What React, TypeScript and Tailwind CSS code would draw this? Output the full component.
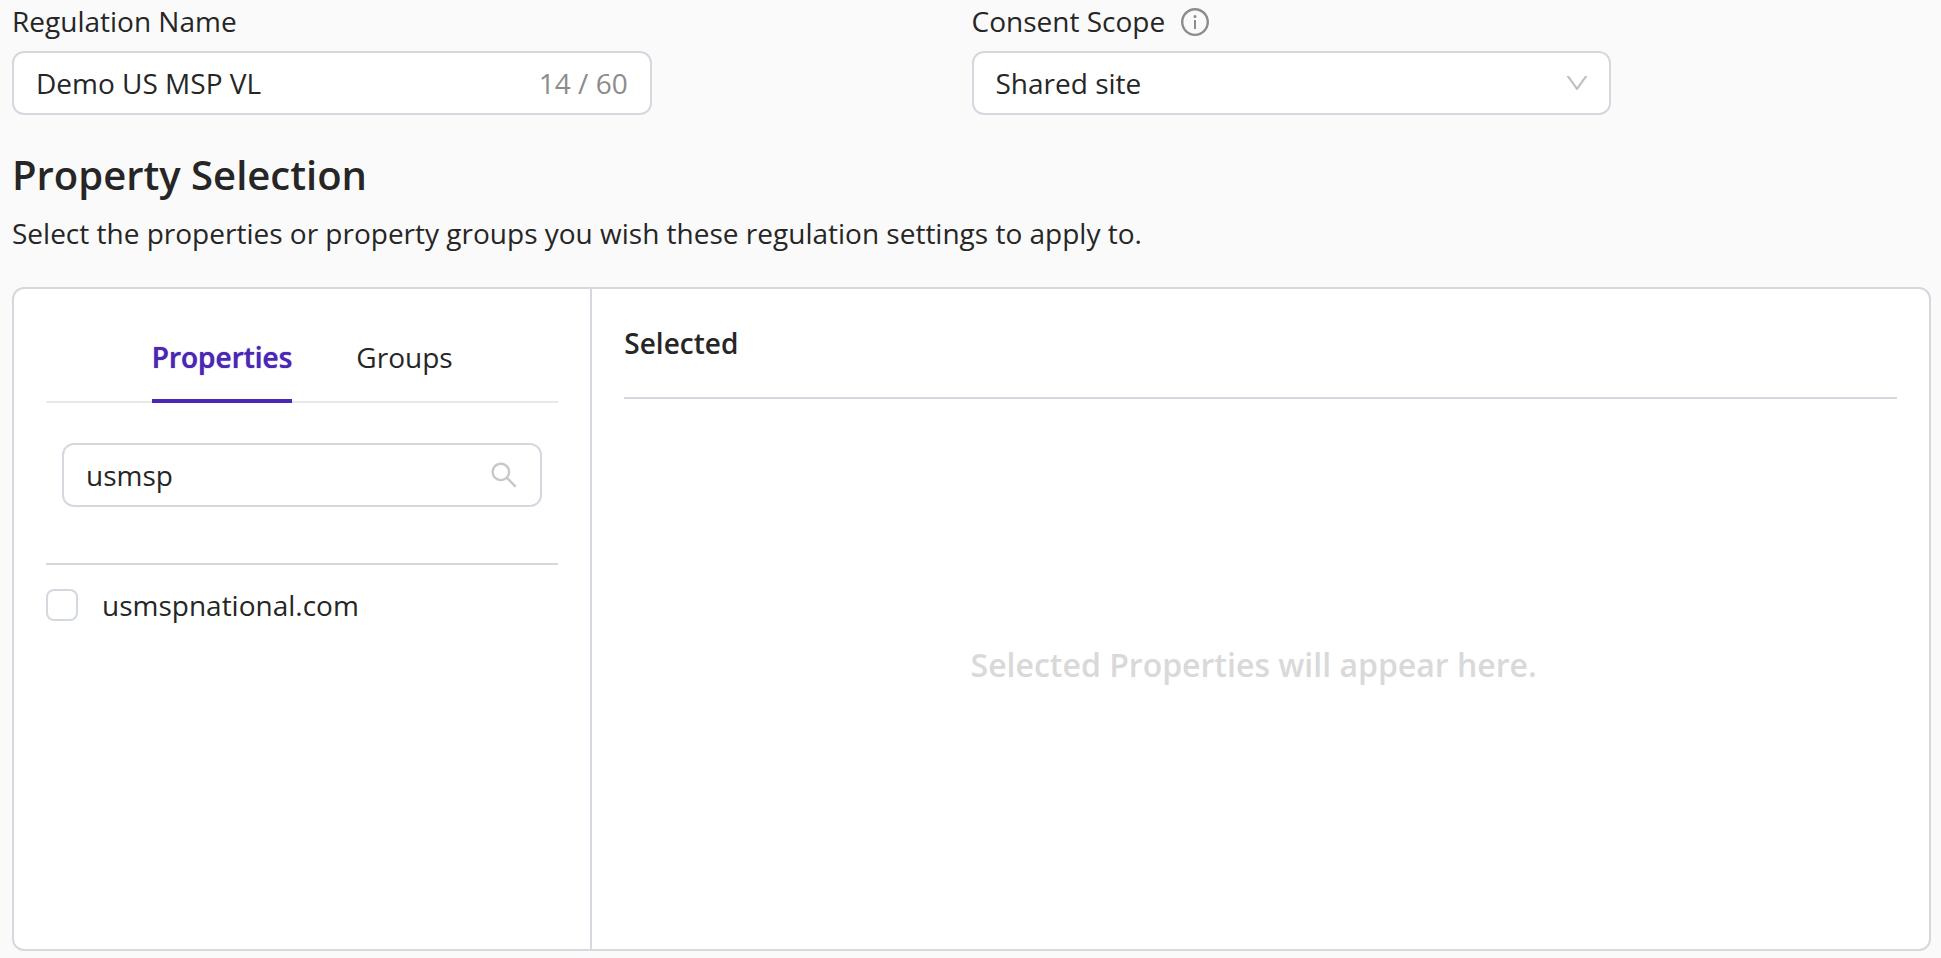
import { useState } from "react";
import { AiOutlineDown, AiOutlineInfoCircle, AiOutlineSearch } from "react-icons/ai";

const MAX_NAME = 60;
const PROPERTIES = ["usmspnational.com"];
const TABS = ["Properties", "Groups"];

export default function App() {
  const [name, setName] = useState("Demo US MSP VL");
  const [tab, setTab] = useState("Properties");
  const [query, setQuery] = useState("usmsp");

  return (
    <main className="flex min-h-screen flex-col bg-[#fafafa] pr-2.5 pb-2 pl-3 font-['Open_Sans',sans-serif] text-[28px] leading-[44px] text-[#262626]">
      <div className="grid grid-cols-2">
        <div className="w-2/3">
          <label htmlFor="regulation-name" className="block leading-[42px]">
            Regulation Name
          </label>
          <div className="mt-[9px] flex h-16 items-center rounded-xl border-2 border-[#d3d9de] bg-white px-[22px]">
            <input
              id="regulation-name"
              type="text"
              maxLength={MAX_NAME}
              value={name}
              onChange={(e) => setName(e.target.value)}
              className="min-w-0 flex-1 bg-transparent outline-none"
            />
            <span className="text-[#8c8c8c]">
              {name.length} / {MAX_NAME}
            </span>
          </div>
        </div>

        <div className="w-2/3">
          <div className="flex items-center gap-3.5 leading-[42px]">
            <label htmlFor="consent-scope">Consent Scope</label>
            <AiOutlineInfoCircle className="mt-0.5 size-8 text-[#8c8c8c]" aria-hidden />
          </div>
          <div className="relative mt-[9px]">
            <select
              id="consent-scope"
              className="block h-16 w-full appearance-none rounded-xl border-2 border-[#d3d9de] bg-white px-[22px] outline-none"
            >
              <option>Shared site</option>
            </select>
            <AiOutlineDown
              className="pointer-events-none absolute top-[18px] right-5 size-7 text-[#bfbfbf]"
              aria-hidden
            />
          </div>
        </div>
      </div>

      <h2 className="mt-8 text-[40px] leading-[56px] font-semibold">Property Selection</h2>
      <p className="mt-2">Select the properties or property groups you wish these regulation settings to apply to.</p>

      <div className="mt-8 flex min-h-[664px] rounded-xl border-2 border-[#d3d9de] bg-white">
        <section className="w-[30.2%] border-r-2 border-[#d3d9de] px-8 pt-8">
          <div role="tablist" className="flex justify-center gap-16 border-b-2 border-[#e8e8e8]">
            {TABS.map((t) => (
              <button
                key={t}
                type="button"
                role="tab"
                aria-selected={t === tab}
                onClick={() => setTab(t)}
                className={
                  t === tab
                    ? "-mb-0.5 border-b-4 border-[#4c27b3] pt-3.5 pb-5 font-semibold text-[#4c27b3] [text-shadow:0_0_1px_currentColor]"
                    : "-mb-0.5 border-b-4 border-transparent pt-3.5 pb-5"
                }
              >
                {t}
              </button>
            ))}
          </div>

          <div className="mx-4 mt-10 flex h-16 items-center rounded-xl border-2 border-[#d3d9de] px-5">
            <input
              type="search"
              aria-label="Search properties"
              value={query}
              onChange={(e) => setQuery(e.target.value)}
              className="min-w-0 flex-1 bg-transparent pl-0.5 outline-none"
            />
            <AiOutlineSearch className="size-8 text-[#c8c8c8]" aria-hidden />
          </div>

          <ul className="mt-14 border-t-2 border-[#d3d9de] pt-[18px]">
            {PROPERTIES.map((p) => (
              <li key={p}>
                <label className="flex items-center gap-6">
                  <input
                    type="checkbox"
                    className="size-8 shrink-0 appearance-none rounded-lg border-2 border-[#d3d9de] bg-white checked:bg-[#4c27b3]"
                  />
                  {p}
                </label>
              </li>
            ))}
          </ul>
        </section>

        <section className="flex flex-1 flex-col px-8 pt-8">
          <h3 className="border-b-2 border-[#d3d9de] pb-8 font-semibold">Selected</h3>
          <div className="flex flex-1 items-center justify-center pr-3.5 pb-[18px] text-[32px] font-semibold text-[#d9d9d9]">
            Selected Properties will appear here.
          </div>
        </section>
      </div>
    </main>
  );
}
